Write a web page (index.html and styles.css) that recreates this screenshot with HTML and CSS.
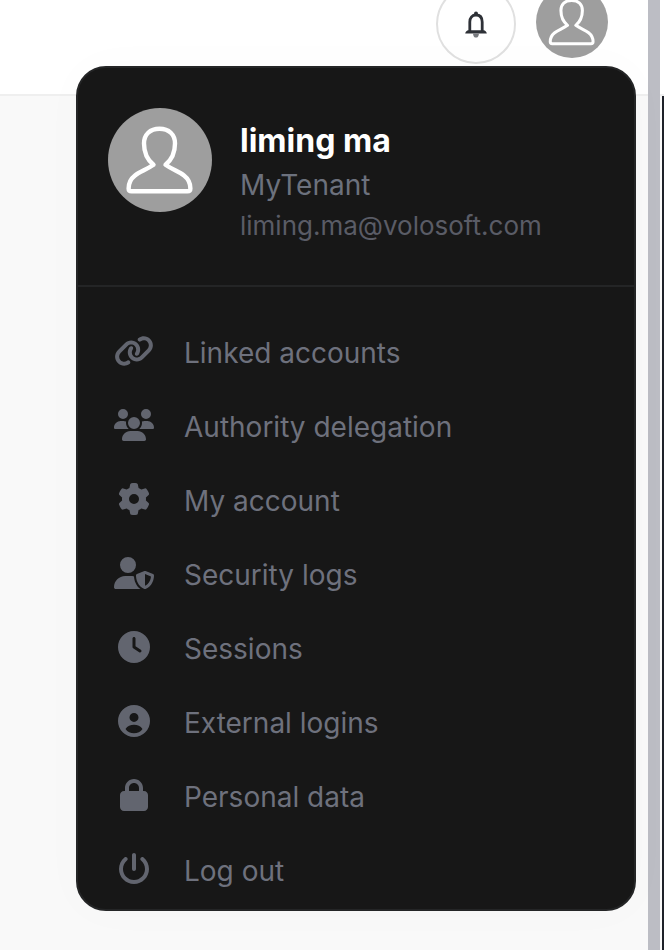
FILE: index.html
```html
<!DOCTYPE html>
<html lang="en">
<head>
<meta charset="utf-8">
<title>Account menu</title>
<link rel="stylesheet" href="styles.css">
</head>
<body>
<svg class="sprite" aria-hidden="true">
  <symbol id="person" viewBox="0 0 104 104">
    <path fill="none" stroke="#fff" stroke-width="4.4" stroke-linejoin="round" d="M51.5 20.8C42 20.8 36 26.5 36 35.5C36 44.5 39 51.5 45.5 56.8C38 62 32 63.5 27 67.5C22.5 71 20.6 75 20.6 80.5C20.6 82.5 21.5 83.3 23.5 83.3H79.5C81.5 83.3 82.4 82.5 82.4 80.5C82.4 75 80.5 71 76 67.5C71 63.5 65 62 57.5 56.8C64 51.5 67 44.5 67 35.5C67 26.5 61 20.8 51.5 20.8z"/>
  </symbol>
</svg>
<div class="shell">
  <div class="page">
    <header class="topbar">
      <button class="bell" type="button" aria-label="Notifications">
        <svg viewBox="0 0 24 28" width="24" height="28" aria-hidden="true">
          <circle cx="12" cy="3.4" r="2" fill="#2e3137"/>
          <path d="M5.8 21V12C5.8 7.6 8.2 5 12 5S18.2 7.6 18.2 12V21" fill="none" stroke="#2e3137" stroke-width="2.8"/>
          <path d="M1.2 23.4C1.4 21.4 3 20.4 4.4 20.2H19.6C21 20.4 22.6 21.4 22.8 23.4z" fill="#2e3137"/>
          <path d="M9 23.4H15C14.8 26.2 13.6 27.6 12 27.6S9.2 26.2 9 23.4z" fill="#77797e"/>
        </svg>
      </button>
      <button class="avatar avatar-small" type="button" aria-label="Account">
        <svg class="person" aria-hidden="true"><use href="#person"/></svg>
      </button>
    </header>
    <section class="account-menu" aria-label="Account menu">
      <div class="profile">
        <div class="avatar avatar-large"><svg class="person" aria-hidden="true"><use href="#person"/></svg></div>
        <div class="identity">
          <strong class="name">liming ma</strong>
          <span class="tenant">MyTenant</span>
          <span class="email">liming.ma@volosoft.com</span>
        </div>
      </div>
      <nav class="links">
        <a class="item" href="#linked"><svg class="icon" viewBox="0 0 640 512" aria-hidden="true"><path d="M579.8 267.7c56.5-56.5 56.5-148 0-204.5c-50-50-128.8-56.5-186.3-15.4l-1.6 1.1c-14.4 10.3-17.7 30.3-7.4 44.6s30.3 17.7 44.6 7.4l1.6-1.1c32.1-22.9 76-19.3 103.8 8.6c31.5 31.5 31.5 82.5 0 114L422.3 334.8c-31.5 31.5-82.5 31.5-114 0c-27.9-27.9-31.5-71.8-8.6-103.8l1.1-1.6c10.3-14.4 6.9-34.4-7.4-44.6s-34.4-6.9-44.6 7.4l-1.1 1.6C206.5 251.2 213 330 263 380c56.5 56.5 148 56.5 204.5 0L579.8 267.7zM60.2 244.3c-56.5 56.5-56.5 148 0 204.5c50 50 128.8 56.5 186.3 15.4l1.6-1.1c14.4-10.3 17.7-30.3 7.4-44.6s-30.3-17.7-44.6-7.4l-1.6 1.1c-32.1 22.9-76 19.3-103.8-8.6C74 372 74 321 105.5 289.5L217.7 177.2c31.5-31.5 82.5-31.5 114 0c27.9 27.9 31.5 71.8 8.6 103.9l-1.1 1.6c-10.3 14.4-6.9 34.4 7.4 44.6s34.4 6.9 44.6-7.4l1.1-1.6C433.5 260.8 427 182 377 132c-56.5-56.5-148-56.5-204.5 0L60.2 244.3z"/></svg>Linked accounts</a>
        <a class="item" href="#delegation"><svg class="icon" viewBox="0 0 640 512" aria-hidden="true"><path d="M144 0a80 80 0 1 1 0 160A80 80 0 1 1 144 0zM512 0a80 80 0 1 1 0 160A80 80 0 1 1 512 0zM0 298.7C0 239.8 47.8 192 106.7 192h42.7c15.9 0 31 3.5 44.6 9.7c-1.3 7.2-1.9 14.7-1.9 22.3c0 38.2 16.8 72.5 43.3 96c-.2 0-.4 0-.7 0H21.3C9.6 320 0 310.4 0 298.7zM405.3 320c-.2 0-.4 0-.7 0c26.6-23.5 43.3-57.8 43.3-96c0-7.6-.7-15-1.9-22.3c13.6-6.3 28.7-9.7 44.6-9.7h42.7C592.2 192 640 239.8 640 298.7c0 11.8-9.6 21.3-21.3 21.3H405.3zM224 224a96 96 0 1 1 192 0 96 96 0 1 1 -192 0zM128 485.3C128 411.7 187.7 352 261.3 352H378.7C452.3 352 512 411.7 512 485.3c0 14.7-11.9 26.7-26.7 26.7H154.7c-14.7 0-26.7-11.9-26.7-26.7z"/></svg>Authority delegation</a>
        <a class="item" href="#account"><svg class="icon" viewBox="0 0 512 512" aria-hidden="true"><path d="M495.9 166.6c3.2 8.7 .5 18.4-6.4 24.6l-43.3 39.4c1.1 8.3 1.7 16.8 1.7 25.4s-.6 17.1-1.7 25.4l43.3 39.4c6.9 6.2 9.6 15.9 6.4 24.6c-4.4 11.9-9.7 23.3-15.8 34.3l-4.7 8.1c-6.6 11-14 21.4-22.1 31.2c-5.9 7.2-15.7 9.6-24.5 6.8l-55.7-17.7c-13.4 10.3-28.2 18.9-44 25.4l-12.5 57.1c-2 9.1-9 16.3-18.2 17.8c-13.8 2.3-28 3.5-42.5 3.5s-28.7-1.2-42.5-3.5c-9.2-1.5-16.2-8.7-18.2-17.8l-12.5-57.1c-15.8-6.5-30.6-15.1-44-25.4L83.1 425.9c-8.8 2.8-18.6 .3-24.5-6.8c-8.1-9.8-15.5-20.2-22.1-31.2l-4.7-8.1c-6.1-11-11.4-22.4-15.8-34.3c-3.2-8.7-.5-18.4 6.4-24.6l43.3-39.4C64.6 273.1 64 264.6 64 256s.6-17.1 1.7-25.4L22.4 191.2c-6.9-6.2-9.6-15.9-6.4-24.6c4.4-11.9 9.7-23.3 15.8-34.3l4.7-8.1c6.6-11 14-21.4 22.1-31.2c5.9-7.2 15.7-9.6 24.5-6.8l55.7 17.7c13.4-10.3 28.2-18.9 44-25.4l12.5-57.1c2-9.1 9-16.3 18.2-17.8C227.3 1.2 241.5 0 256 0s28.7 1.2 42.5 3.5c9.2 1.5 16.2 8.7 18.2 17.8l12.5 57.1c15.8 6.5 30.6 15.1 44 25.4l55.7-17.7c8.8-2.8 18.6-.3 24.5 6.8c8.1 9.8 15.5 20.2 22.1 31.2l4.7 8.1c6.1 11 11.4 22.4 15.8 34.3zM256 336a80 80 0 1 0 0-160 80 80 0 1 0 0 160z"/></svg>My account</a>
        <a class="item" href="#security"><svg class="icon" viewBox="0 0 640 512" aria-hidden="true"><path d="M224 256A128 128 0 1 0 224 0a128 128 0 1 0 0 256zm-45.7 48C79.8 304 0 383.8 0 482.3C0 498.7 13.3 512 29.7 512H418.3c1.8 0 3.5-.2 5.3-.5c-76.3-55.1-99.8-141-103.1-200.2c-16.1-4.8-33.1-7.3-50.7-7.3H178.3zm308.8-78.3l-120 48C358 277.4 352 286.2 352 296c0 63.3 25.9 168.8 134.8 214.2c5.9 2.5 12.6 2.5 18.5 0C614.1 464.8 640 359.3 640 296c0-9.8-6-18.6-15.1-22.3l-120-48c-5.7-2.3-12.1-2.3-17.8 0zM591.4 312c-3.9 50.7-27.2 116.7-95.4 149.7V273.8L591.4 312z"/></svg>Security logs</a>
        <a class="item" href="#sessions"><svg class="icon" viewBox="0 0 512 512" aria-hidden="true"><path d="M256 0a256 256 0 1 1 0 512A256 256 0 1 1 256 0zM232 120V256c0 8 4 15.5 10.7 20l96 64c11 7.4 25.9 4.4 33.3-6.7s4.4-25.9-6.7-33.3L280 243.2V120c0-13.3-10.7-24-24-24s-24 10.7-24 24z"/></svg>Sessions</a>
        <a class="item" href="#external"><svg class="icon" viewBox="0 0 32 32" aria-hidden="true"><path fill-rule="evenodd" d="M16 0a16 16 0 1 1 0 32A16 16 0 1 1 16 0zM16 7.9a4.5 4.5 0 1 0 0 9A4.5 4.5 0 1 0 16 7.9zM7.5 24C9.5 26.9 12.5 28.3 16 28.3S22.5 26.9 24.5 24C22.6 21.2 19.5 19.8 16 19.8S9.4 21.2 7.5 24z"/></svg>External logins</a>
        <a class="item" href="#personal"><svg class="icon" viewBox="0 0 448 512" aria-hidden="true"><path d="M144 144v48H304V144c0-44.2-35.8-80-80-80s-80 35.8-80 80zM80 192V144C80 64.5 144.5 0 224 0s144 64.5 144 144v48h16c35.3 0 64 28.7 64 64V448c0 35.3-28.7 64-64 64H64c-35.3 0-64-28.7-64-64V256c0-35.3 28.7-64 64-64H80z"/></svg>Personal data</a>
        <a class="item" href="#logout"><svg class="icon" viewBox="0 0 512 512" aria-hidden="true"><path d="M288 32c0-17.7-14.3-32-32-32s-32 14.3-32 32V256c0 17.7 14.3 32 32 32s32-14.3 32-32V32zM143.5 120.6c13.6-11.3 15.4-31.5 4.1-45.1s-31.5-15.4-45.1-4.1C49.7 115.4 16 181.8 16 256c0 132.5 107.5 240 240 240s240-107.5 240-240c0-74.2-33.8-140.6-86.6-184.6c-13.6-11.3-33.8-9.4-45.1 4.1s-9.4 33.8 4.1 45.1c38.9 32.3 63.5 81 63.5 135.4c0 97.2-78.8 176-176 176s-176-78.8-176-176c0-54.4 24.7-103.1 63.5-135.4z"/></svg>Log out</a>
      </nav>
    </section>
  </div>
  <div class="track"></div>
  <div class="edge">
    <div class="edge-top"></div>
    <div class="edge-body"></div>
  </div>
</div>
</body>
</html>
```
FILE: styles.css
```css
* {
  box-sizing: border-box;
}

body {
  margin: 0;
  background: #f9f9f9;
  font-family: Inter, "Liberation Sans", sans-serif;
  overflow: hidden;
}

.sprite {
  position: absolute;
  width: 0;
  height: 0;
}

.shell {
  display: grid;
  grid-template-columns: 1fr 12px 4px;
  min-height: 100vh;
}

.page {
  position: relative;
}

.track {
  background: #bcbdc4;
}

.edge {
  display: flex;
  flex-direction: column;
}

.edge-top {
  height: 96px;
  background: #fff;
  border-bottom: 2px solid #efefef;
}

.edge-body {
  flex: 1;
  border-right: 2px solid #1e2129;
}

.topbar {
  display: flex;
  justify-content: flex-end;
  align-items: flex-start;
  gap: 20px;
  height: 96px;
  padding-right: 40px;
  background: #fff;
  border-bottom: 2px solid #efefef;
}

button {
  padding: 0;
  border: 0;
}

.bell {
  display: flex;
  align-items: center;
  justify-content: center;
  width: 80px;
  height: 80px;
  margin-top: -16px;
  background: #fff;
  border: 2px solid #e0e0e0;
  border-radius: 50%;
}

.avatar {
  flex: none;
  background: #9e9e9e;
  border-radius: 50%;
}

.avatar-small {
  width: 72px;
  height: 72px;
  margin-top: -14px;
}

.avatar-large {
  width: 104px;
  height: 104px;
}

.person {
  display: block;
  width: 100%;
  height: 100%;
}

.account-menu {
  position: absolute;
  top: 66px;
  right: 12px;
  left: 76px;
  padding-bottom: 1px;
  background: #171717;
  border: 2px solid #242526;
  border-radius: 30px;
  box-shadow: 0 0 48px rgba(0, 0, 0, 0.02);
}

.profile {
  display: flex;
  gap: 28px;
  padding: 40px 30px 41px;
  border-bottom: 2px solid #242526;
}

.identity {
  display: flex;
  flex-direction: column;
  gap: 1px;
  padding-top: 12px;
}

.name {
  color: #fff;
  font-size: 32px;
  font-weight: 700;
  line-height: 42px;
}

.tenant {
  color: #6c717d;
  font-size: 28px;
  line-height: 44px;
}

.email {
  color: #5a5c66;
  font-size: 26px;
  line-height: 36px;
}

.links {
  padding-top: 29px;
}

.item {
  display: flex;
  align-items: center;
  gap: 30px;
  height: 74px;
  padding: 0 36px;
  color: #6e717d;
  font-size: 28px;
  line-height: 42px;
  text-decoration: none;
}

.icon {
  flex: none;
  width: 40px;
  height: 32px;
  margin-bottom: 4px;
  fill: #62656f;
}
```
